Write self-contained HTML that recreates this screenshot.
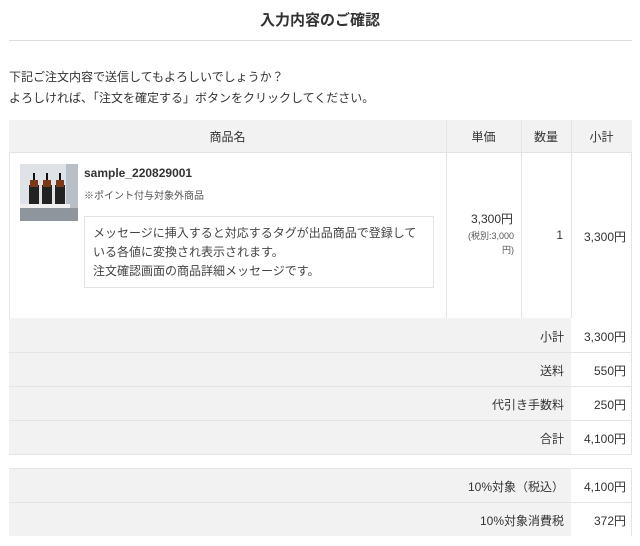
<!DOCTYPE html>
<html><head><meta charset="utf-8"><style>
*{margin:0;padding:0;box-sizing:border-box}
body{width:640px;height:546px;background:#fff;font-family:"Liberation Sans","Noto Sans CJK JP",sans-serif;color:#333;position:relative;overflow:hidden}
.a{position:absolute;white-space:nowrap}
.g{position:absolute;background:#f2f2f2}
.l{position:absolute;background:#e4e4e4}
.t{font-size:12px}
</style></head><body>
<div class="a" style="left:0;width:640px;top:9px;text-align:center;font-size:15px;font-weight:bold;color:#333">入力内容のご確認</div>
<div class="l" style="left:9px;top:40px;width:623px;height:1px;background:#ddd"></div>
<div class="a t" style="left:9px;top:68px">下記ご注文内容で送信してもよろしいでしょうか？</div>
<div class="a t" style="left:9px;top:89px">よろしければ、「注文を確定する」ボタンをクリックしてください。</div>

<div class="g" style="left:9px;top:120px;width:623px;height:32px"></div>
<div class="a t" style="left:9px;width:437px;top:128px;text-align:center">商品名</div>
<div class="a t" style="left:446px;width:75px;top:128px;text-align:center">単価</div>
<div class="a t" style="left:521px;width:50px;top:128px;text-align:center">数量</div>
<div class="a t" style="left:571px;width:61px;top:128px;text-align:center">小計</div>

<svg class="a" style="left:20px;top:164px" width="58" height="57" viewBox="0 0 58 57">
<rect width="58" height="57" fill="#cfd3d8"/>
<rect x="0" y="0" width="46" height="40" fill="#dfe2e6"/>
<rect x="46" y="0" width="12" height="57" fill="#b9bfc6"/>
<rect x="0" y="44" width="58" height="13" fill="#8e959c"/>
<rect x="0" y="40" width="50" height="4" fill="#f0f0f0"/>
<g fill="#222"><rect x="9" y="21" width="10" height="19"/><rect x="22" y="21" width="10" height="19"/><rect x="35" y="21" width="10" height="19"/></g>
<g fill="#7a3a1a"><rect x="10" y="16" width="8" height="7"/><rect x="23" y="16" width="8" height="7"/><rect x="36" y="16" width="8" height="7"/></g>
<g fill="#111"><rect x="13" y="9" width="2" height="7"/><rect x="26" y="9" width="2" height="7"/><rect x="39" y="9" width="2" height="7"/></g>
</svg>
<div class="a" style="left:84px;top:166px;font-size:12px;font-weight:bold">sample_220829001</div>
<div class="a" style="left:84px;top:187px;font-size:10px;color:#555">※ポイント付与対象外商品</div>
<div class="a" style="left:84px;top:216px;width:350px;height:72px;border:1px solid #e4e4e4;padding:7px 8px;font-size:12px;line-height:19px;white-space:normal;color:#444">メッセージに挿入すると対応するタグが出品商品で登録している各値に変換され表示されます。<br>注文確認画面の商品詳細メッセージです。</div>

<div class="a t" style="left:446px;width:67px;top:210px;text-align:right">3,300円</div>
<div class="a" style="left:446px;width:68px;top:229px;text-align:right;font-size:9px;line-height:14px;white-space:normal;color:#555">(税別:3,000<br>円)</div>
<div class="a t" style="left:521px;width:42px;top:228px;text-align:right">1</div>
<div class="a t" style="left:571px;width:55px;top:228px;text-align:right">3,300円</div>

<div class="l" style="left:446px;top:120px;width:1px;height:198px"></div>
<div class="l" style="left:521px;top:120px;width:1px;height:198px"></div>
<div class="l" style="left:571px;top:120px;width:1px;height:198px"></div>
<div class="l" style="left:9px;top:152px;width:623px;height:1px"></div>
<div class="l" style="left:9px;top:152px;width:1px;height:166px"></div>
<div class="l" style="left:631px;top:152px;width:1px;height:166px"></div>

<div class="g" style="left:9px;top:318px;width:562px;height:136px"></div>
<div class="l" style="left:9px;top:352px;width:623px;height:1px"></div>
<div class="l" style="left:9px;top:386px;width:623px;height:1px"></div>
<div class="l" style="left:9px;top:420px;width:623px;height:1px"></div>
<div class="l" style="left:9px;top:454px;width:623px;height:1px"></div>
<div class="l" style="left:631px;top:318px;width:1px;height:136px"></div>
<div class="a t" style="left:9px;width:555px;top:328px;text-align:right">小計</div>
<div class="a t" style="left:571px;width:55px;top:328px;text-align:right">3,300円</div>
<div class="a t" style="left:9px;width:555px;top:362px;text-align:right">送料</div>
<div class="a t" style="left:571px;width:55px;top:362px;text-align:right">550円</div>
<div class="a t" style="left:9px;width:555px;top:396px;text-align:right">代引き手数料</div>
<div class="a t" style="left:571px;width:55px;top:396px;text-align:right">250円</div>
<div class="a t" style="left:9px;width:555px;top:430px;text-align:right">合計</div>
<div class="a t" style="left:571px;width:55px;top:430px;text-align:right">4,100円</div>

<div class="g" style="left:9px;top:468px;width:562px;height:68px"></div>
<div class="l" style="left:9px;top:468px;width:623px;height:1px"></div>
<div class="l" style="left:9px;top:502px;width:623px;height:1px"></div>
<div class="l" style="left:631px;top:468px;width:1px;height:68px"></div>
<div class="a t" style="left:9px;width:555px;top:478px;text-align:right">10%対象（税込）</div>
<div class="a t" style="left:571px;width:55px;top:478px;text-align:right">4,100円</div>
<div class="a t" style="left:9px;width:555px;top:512px;text-align:right">10%対象消費税</div>
<div class="a t" style="left:571px;width:55px;top:512px;text-align:right">372円</div>
</body></html>
